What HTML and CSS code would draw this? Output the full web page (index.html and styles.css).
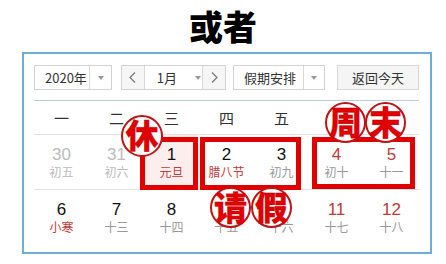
FILE: index.html
```html
<!DOCTYPE html>
<html lang="zh-CN">
<head>
<meta charset="utf-8">
<title>或者</title>
<link rel="stylesheet" href="styles.css">
</head>
<body>
<h1 class="title">或者</h1>
<div class="cal">
  <div class="toolbar">
    <div class="ctl year">
      <span class="label">2020年</span>
      <span class="drop"><i class="tri"></i></span>
    </div>
    <div class="ctl month">
      <span class="nav"><svg width="7" height="11" viewBox="0 0 7 11"><polyline points="6,0.5 1,5.5 6,10.5" fill="none" stroke="#777" stroke-width="1.2"/></svg></span>
      <span class="mid"><span class="mlabel">1月</span><i class="tri"></i></span>
      <span class="nav"><svg width="7" height="11" viewBox="0 0 7 11"><polyline points="1,0.5 6,5.5 1,10.5" fill="none" stroke="#777" stroke-width="1.2"/></svg></span>
    </div>
    <div class="ctl holiday">
      <span class="label">假期安排</span>
      <span class="drop"><i class="tri"></i></span>
    </div>
    <button class="today">返回今天</button>
  </div>
  <div class="weekdays">
    <span>一</span><span>二</span><span>三</span><span>四</span><span>五</span><span>六</span><span>日</span>
  </div>
  <div class="days">
    <div class="day other"><b>30</b><em>初五</em></div>
    <div class="day other"><b>31</b><em>初六</em></div>
    <div class="day sel"><b>1</b><em class="fest">元旦</em></div>
    <div class="day"><b>2</b><em class="fest">腊八节</em></div>
    <div class="day"><b>3</b><em>初九</em></div>
    <div class="day wk"><b>4</b><em>初十</em></div>
    <div class="day wk"><b>5</b><em>十一</em></div>
    <div class="day"><b>6</b><em class="fest">小寒</em></div>
    <div class="day"><b>7</b><em>十三</em></div>
    <div class="day"><b>8</b><em>十四</em></div>
    <div class="day"><b>9</b><em>十五</em></div>
    <div class="day"><b>10</b><em>十六</em></div>
    <div class="day wk"><b>11</b><em>十七</em></div>
    <div class="day wk"><b>12</b><em>十八</em></div>
  </div>
  <div class="box box1"></div>
  <div class="box box2"></div>
  <div class="box box3"></div>
  <div class="stamp s-xiu">休</div>
  <div class="stamp s-zhou">周</div>
  <div class="stamp s-mo">末</div>
  <div class="stamp s-qing">请</div>
  <div class="stamp s-jia">假</div>
</div>
</body>
</html>
```

FILE: styles.css
```css
* { box-sizing: border-box; }
body {
  margin: 0;
  background: #fff;
  font-family: "Noto Sans CJK SC", "Microsoft YaHei", sans-serif;
}
.title {
  margin: 0;
  height: 52px;
  line-height: 52px;
  text-align: center;
  font-size: 34px;
  font-weight: 900;
  color: #000;
}
.cal {
  position: relative;
  margin-left: 22px;
  width: 410px;
  height: 202px;
  border: 2px solid #6eaed6;
  padding: 11px 11px 0 10px;
  background: #fff;
}
.toolbar {
  display: flex;
  height: 36px;
  padding-bottom: 11px;
  border-bottom: 1px solid #b9cfe0;
}
.ctl {
  display: flex;
  height: 25px;
  border: 1px solid #d2d2d2;
  font-size: 13px;
  color: #333;
  background: #fff;
  line-height: 23px;
}
.year { width: 78px; }
.year .label { width: 55px; padding-left: 10px; border-right: 1px solid #d8d8d8; white-space: nowrap; }
.drop { flex: 1; display: flex; align-items: center; justify-content: center; }
.tri {
  display: block;
  width: 0;
  height: 0;
  border-left: 3.5px solid transparent;
  border-right: 3.5px solid transparent;
  border-top: 4px solid #999;
}
.month { width: 105px; margin-left: 9px; }
.nav {
  width: 22px;
  display: flex;
  align-items: center;
  justify-content: center;
  background: #f6f6f6;
}
.mid {
  width: 60px;
  display: flex;
  align-items: center;
  padding-left: 12px;
  border-left: 1px solid #d8d8d8;
  border-right: 1px solid #d8d8d8;
}
.mid .tri { margin-left: 18px; }
.holiday { width: 92px; margin-left: 7px; }
.holiday .label { width: 70px; padding-left: 10px; border-right: 1px solid #d8d8d8; white-space: nowrap; }
.today {
  margin-left: auto;
  width: 82px;
  height: 25px;
  border: 1px solid #d8d8d8;
  background: #f5f5f5;
  font-family: inherit;
  font-size: 13px;
  color: #333;
  padding: 0;
}
.weekdays {
  display: grid;
  grid-template-columns: repeat(7, 55px);
  height: 34px;
  border-bottom: 1px solid #e2e2e2;
  font-size: 15px;
  color: #333;
  line-height: 33px;
  text-align: center;
}
.days {
  display: grid;
  grid-template-columns: repeat(7, 55px);
  grid-auto-rows: 55px;
}
.day {
  display: flex;
  flex-direction: column;
  align-items: center;
  padding-top: 10px;
}
.days .day:nth-child(-n+7) { border-bottom: 1px solid #e2e2e2; }
.day b {
  font-family: "Liberation Sans", Arial, sans-serif;
  font-weight: 400;
  font-size: 17px;
  line-height: 20px;
  color: #111;
}
.day em {
  font-style: normal;
  font-size: 12px;
  line-height: 14px;
  color: #999;
}
.day.other b, .day.other em { color: #bbb; }
.day.wk b { color: #c03a3a; }
.day em.fest { color: #c33a3a; }
.day.sel { background: #fdeeee; }
.box {
  position: absolute;
  border: 5px solid #e00000;
}
.box1 { left: 116px; top: 83px; width: 58px; height: 53px; }
.box2 { left: 176px; top: 83px; width: 101px; height: 53px; }
.box3 { left: 288px; top: 83px; width: 103px; height: 52px; }
.stamp {
  position: absolute;
  width: 41px;
  height: 41px;
  border: 2px solid #c01414;
  border-radius: 50%;
  background: #fff;
  color: #e00000;
  font-size: 33px;
  font-weight: 900;
  line-height: 33px;
  display: flex;
  align-items: center;
  justify-content: center;
  padding-bottom: 3px;
  -webkit-text-stroke: 0.3px #b00000;
}
.s-xiu { left: 97px; top: 61px; width: 42px; height: 42px; }
.s-zhou { left: 301px; top: 48px; }
.s-mo { left: 341px; top: 48px; }
.s-qing { left: 186px; top: 133px; }
.s-jia { left: 227px; top: 133px; }
```
